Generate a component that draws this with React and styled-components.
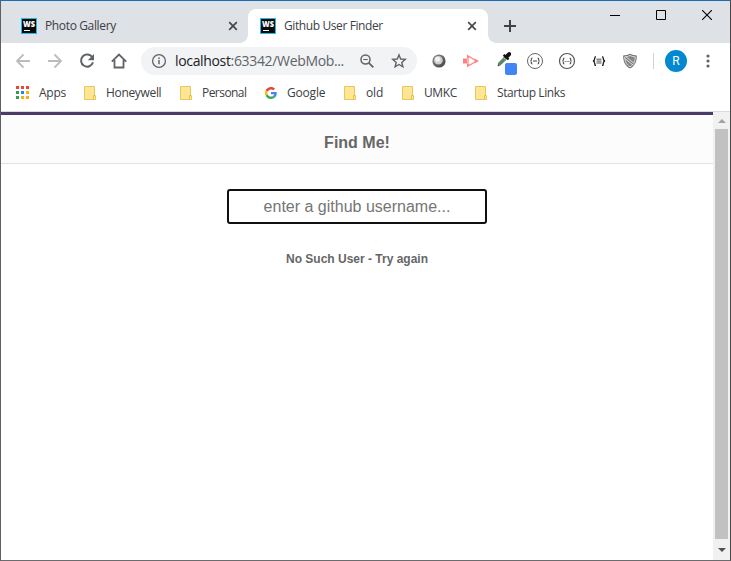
import React from "react";
import styled, { createGlobalStyle } from "styled-components";

const GlobalStyle = createGlobalStyle`
  * { box-sizing: border-box; }
  html, body { margin: 0; padding: 0; overflow: hidden; }
  body { font-family: "Open Sans", "Noto Sans", sans-serif; }
  svg { display: block; flex: none; }
`;

const BrowserWindow = styled.div`
  width: 731px;
  height: 561px;
  display: flex;
  flex-direction: column;
  background: #fff;
  border: 1px solid #5f5f61;
  border-top-color: #1a6fb4;
  border-right-color: #48484b;
  border-bottom-color: #6c6c6e;
`;

const TabStrip = styled.div`
  height: 42px;
  flex: none;
  display: flex;
  background: #dee1e6;
`;

const Tab = styled.div`
  position: relative;
  width: ${(p) => (p.$active ? 240 : 247)}px;
  height: 34px;
  margin-top: 8px;
  padding: 0 ${(p) => (p.$active ? 11 : 10)}px 0 ${(p) => (p.$active ? 12 : 20)}px;
  display: flex;
  align-items: center;
  border-radius: 8px 8px 0 0;
  background: ${(p) => (p.$active ? "#fff" : "transparent")};
  ${(p) =>
    p.$active &&
    `
    &::before, &::after {
      content: "";
      position: absolute;
      bottom: 0;
      width: 8px;
      height: 8px;
    }
    &::before { right: 100%; background: radial-gradient(circle at 0 0, transparent 7.5px, #fff 8px); }
    &::after { left: 100%; background: radial-gradient(circle at 100% 0, transparent 7.5px, #fff 8px); }
  `}
`;

const TabTitle = styled.span`
  flex: 1;
  margin-left: 8px;
  font-size: 12px;
  line-height: 16px;
  white-space: nowrap;
  letter-spacing: ${(p) => p.$tracking}px;
  color: #3c4043;
`;

const NewTab = styled.div`
  width: 44px;
  display: flex;
  align-items: center;
  justify-content: center;
  padding-top: 8px;
`;

const WindowControls = styled.div`
  margin-left: auto;
  display: flex;
  height: 28px;
`;

const ControlButton = styled.div`
  width: 46px;
  display: flex;
  align-items: center;
  justify-content: center;
`;

const Toolbar = styled.div`
  height: 36px;
  flex: none;
  display: flex;
  align-items: center;
  padding-left: 6px;
`;

const IconSlot = styled.div`
  width: ${(p) => p.$w || 32}px;
  height: 32px;
  display: flex;
  align-items: center;
  justify-content: center;
  flex: none;
`;

const Omnibox = styled.div`
  width: 276px;
  height: 28px;
  margin-left: 6px;
  margin-right: 6px;
  border-radius: 14px;
  background: #f1f3f4;
  display: flex;
  align-items: center;
  padding-left: 10px;
  flex: none;
`;

const Address = styled.span`
  width: 174px;
  margin-left: 8px;
  font-size: 14px;
  line-height: 18px;
  letter-spacing: -0.34px;
  white-space: nowrap;
  color: #5f6368;
`;

const Host = styled.span`
  color: #202124;
`;

const ToolbarDivider = styled.div`
  width: 1px;
  height: 16px;
  margin-right: 11px;
  background: #cfd1d4;
`;

const Avatar = styled.div`
  width: 22px;
  height: 22px;
  flex: none;
  border-radius: 50%;
  background: #0288d1;
  color: #fff;
  font: 12px/22px Roboto, sans-serif;
  text-align: center;
`;

const BookmarkBar = styled.div`
  height: 33px;
  flex: none;
  display: flex;
  padding: 0 0 4px 15px;
  border-bottom: 1px solid #dadce0;
`;

const Bookmark = styled.div`
  width: ${(p) => p.$w}px;
  flex: none;
  display: flex;
  align-items: center;
`;

const BookmarkName = styled.span`
  margin-left: ${(p) => p.$gap}px;
  font-size: 12px;
  line-height: 16px;
  white-space: nowrap;
  letter-spacing: ${(p) => p.$tracking}px;
  color: #3c4043;
`;

const Viewport = styled.div`
  flex: 1;
  min-height: 0;
  display: flex;
`;

const Page = styled.main`
  flex: 1;
  font-family: "Liberation Sans", Arial, sans-serif;
  color: #666;
  text-align: center;
`;

const PageHeader = styled.header`
  height: 52px;
  border-top: 3px solid #4b3c67;
  border-bottom: 1px solid #e1e1e1;
  background: #fcfcfc;
`;

const Heading = styled.h1`
  margin: 0;
  padding-top: 17px;
  font-size: 16px;
  line-height: 22px;
  font-weight: bold;
`;

const UserInput = styled.input`
  display: block;
  width: 260px;
  height: 35px;
  margin: 25px auto 0;
  padding: 0;
  border: 2px solid #101010;
  border-radius: 3px;
  outline: none;
  background: #fff;
  font: 16px "Liberation Sans", Arial, sans-serif;
  text-align: center;
  &::placeholder { color: #757575; opacity: 1; }
`;

const Message = styled.p`
  margin: 27px 0 0;
  font-size: 12px;
  line-height: 16px;
  font-weight: bold;
`;

const Scrollbar = styled.div`
  width: 17px;
  display: flex;
  flex-direction: column;
  align-items: center;
  background: #f1f1f1;
`;

const ScrollArrow = styled.div`
  height: ${(p) => p.$h}px;
  display: flex;
  align-items: center;
`;

const ScrollThumb = styled.div`
  width: 13px;
  flex: 1;
  background: #c1c1c1;
`;

const Favicon = () => (
  <svg width="16" height="16" viewBox="0 0 16 16">
    <rect width="16" height="16" fill="#15bfe8" />
    <rect x="1" y="1" width="14" height="14" fill="#080808" />
    <text x="8" y="9" fill="#fff" fontFamily="Open Sans, sans-serif" fontSize="8.4" fontWeight="800" textAnchor="middle" textLength="12" lengthAdjust="spacingAndGlyphs">WS</text>
    <path d="M3 12.5h6" stroke="#fff" />
  </svg>
);

const CloseIcon = () => (
  <svg width="10" height="10" viewBox="0 0 10 10">
    <path d="M1.2 1.2l7.6 7.6M8.8 1.2L1.2 8.8" stroke="#45494d" strokeWidth="1.7" />
  </svg>
);

const Stroke = ({ d, size = 16, color = "#5f6368", width = 1.8 }) => (
  <svg width={size} height={size} viewBox={`0 0 ${size} ${size}`} fill="none" stroke={color} strokeWidth={width}>
    <path d={d} />
  </svg>
);

const ReloadIcon = () => (
  <svg width="16" height="16" viewBox="0 0 16 16">
    <path d="M13.4 4.4A6.1 6.1 0 1 0 14 9.3" fill="none" stroke="#5f6368" strokeWidth="2" />
    <path d="M15 1v6.2H8.8z" fill="#5f6368" />
  </svg>
);

const InfoIcon = () => (
  <svg width="16" height="16" viewBox="0 0 16 16">
    <circle cx="8" cy="8" r="6.4" fill="none" stroke="#5f6368" strokeWidth="1.3" />
    <path d="M8 7.1v4.2M8 4.5v1.6" stroke="#5f6368" strokeWidth="1.5" />
  </svg>
);

const ZoomOutIcon = () => (
  <svg width="16" height="16" viewBox="0 0 16 16" fill="none" stroke="#5f6368">
    <circle cx="6.5" cy="6.5" r="4.5" strokeWidth="1.5" />
    <path d="M4.3 6.5h4.4" strokeWidth="1.1" />
    <path d="M9.8 9.8l4.5 4.5" strokeWidth="1.8" />
  </svg>
);

const StarIcon = () => (
  <svg width="16" height="16" viewBox="0 0 16 16" fill="none" stroke="#5f6368" strokeWidth="1.4">
    <path d="M8 1.9l1.7 4.1 4.6.4-3.5 3 1.1 4.4L8 11.5l-3.9 2.3 1.1-4.4-3.500-3 4.600-.4z" />
  </svg>
);

const OrbIcon = () => (
  <svg width="16" height="16" viewBox="0 0 16 16">
    <defs>
      <linearGradient id="orb" x1="0" y1="0" x2="1" y2="1">
        <stop offset="0" stopColor="#929292" />
        <stop offset=".5" stopColor="#666" />
        <stop offset="1" stopColor="#444" />
      </linearGradient>
    </defs>
    <circle cx="8" cy="8" r="6.6" fill="url(#orb)" />
    <circle cx="7.4" cy="7.2" r="4.3" fill="#d0d0d0" />
    <circle cx="6.6" cy="6.2" r="2.5" fill="#f3f3f3" />
  </svg>
);

const PlayerIcon = () => (
  <svg width="18" height="16" viewBox="0 0 18 16" fill="#ff8080">
    <path d="M1 5.500h4v5H1z" />
    <path d="M6 3.500V12.500M7.500 3.700L13 7M7.500 12.300L13 9" stroke="#ff8080" strokeWidth="1.200" />
    <path d="M5 1.500L8.500 4 5 5.200zM12.500 5.500L17 8l-4.500 2.500zM5 14.500L8.500 12 5 10.800z" />
  </svg>
);

const DropperIcon = () => (
  <svg width="22" height="28" viewBox="0 0 22 28">
    <path d="M2 19l1-3.400 5.500-5.600 2 2-5.800 5.600z" fill="#a5bfa9" stroke="#33483a" strokeWidth=".9" />
    <path d="M3.500 17.200l5-5" stroke="#39874b" strokeWidth="1.500" />
    <path d="M6.800 8.700l1.600-1.600 1 .8 2-2c1-1 2.600-1 3.200-.3.700.8.700 2.200-.2 3.100l-2 2 .9 1-1.500 1.500z" fill="#111" />
    <rect x="9" y="16" width="12" height="12" rx="2" fill="#4285f4" />
  </svg>
);

const RingBraces = ({ weight, dotted }) => (
  <svg width="18" height="18" viewBox="0 0 18 18" fill="none" stroke="#555">
    <circle cx="9" cy="9" r="7.500" strokeWidth={weight} />
    <path
      d="M6.400 6.200c-1.200 0-1 .6-1 1.400 0 .8 0 1.400-1 1.400 1 0 1 .6 1 1.400 0 .8-.2 1.400 1 1.400M11.600 6.200c1.200 0 1 .6 1 1.400 0 .8 0 1.400 1 1.400-1 0-1 .6-1 1.400 0 .8.200 1.400-1 1.400"
      strokeWidth="1.200"
    />
    <path d={dotted ? "M6.700 9.500h4.600" : "M7 9h4"} strokeWidth="1.100" strokeDasharray={dotted ? "1 .8" : undefined} />
  </svg>
);

const ListBraces = () => (
  <svg width="14" height="12" viewBox="0 0 14 12" fill="none" stroke="#222">
    <path
      d="M4 1.600C2.700 1.600 2.700 2.200 2.700 3.600c0 1.500-.2 2.200-1.700 2.400 1.500.2 1.700.9 1.700 2.400 0 1.400 0 2 1.300 2M10 1.600c1.300 0 1.300.6 1.300 2 0 1.500.2 2.200 1.700 2.400-1.500.2-1.700.9-1.700 2.400 0 1.400 0 2-1.300 2"
      strokeWidth="1.400"
    />
    <path d="M4.500 4.200h5M4.500 6.100h5M4.500 8h5" strokeWidth=".8" />
  </svg>
);

const ShieldIcon = () => (
  <svg width="16" height="16" viewBox="0 0 16 16">
    <path d="M8 .7c2.200 1.300 4.400 1.700 6.800 1.700.1 5.200-1.400 10.200-6.800 13.100C2.600 12.600 1.100 7.600 1.200 2.400 3.600 2.400 5.800 2 8 .7z" fill="#6f6f6f" />
    <path d="M8 2.400c1.800 1 3.500 1.400 5.300 1.400C13.200 8 12 11.700 8 13.900 4 11.700 2.800 8 2.700 3.800 4.500 3.800 6.200 3.400 8 2.400z" fill="#858585" stroke="#f4f4f4" strokeWidth=".8" />
    <path d="M3.300 4.500l8.300 6.800" stroke="#f4f4f4" strokeWidth="2.600" />
    <path d="M3.300 4.500l8.300 6.800" stroke="#777" strokeWidth="1.200" />
  </svg>
);

const MenuIcon = () => (
  <svg width="4" height="14" viewBox="0 0 4 14" fill="#5f6368">
    <circle cx="2" cy="2" r="1.6" />
    <circle cx="2" cy="7" r="1.6" />
    <circle cx="2" cy="12" r="1.6" />
  </svg>
);

const FolderIcon = () => (
  <svg width="12" height="14" viewBox="0 0 12 14">
    <path d="M.5.500h10v9h1v4H.500z" fill="#ffe694" stroke="#e8c75a" />
    <path d="M9.500 13V9.500h1.500" fill="none" stroke="#e8c04c" />
  </svg>
);

const appColors = ["#f44336", "#f44336", "#f44336", "#319f56", "#2187f3", "#f6b012", "#319f56", "#f6b012", "#f6b012"];

const AppsIcon = () => (
  <svg width="14" height="14" viewBox="0 0 14 14">
    {appColors.map((c, i) => (
      <rect key={i} x={(i % 3) * 5} y={Math.floor(i / 3) * 5} width="3" height="3" fill={c} />
    ))}
  </svg>
);

const GoogleIcon = () => (
  <svg width="12" height="12" viewBox="0 0 48 48">
    <path fill="#EA4335" d="M24 9.500c3.540 0 6.710 1.220 9.210 3.600l6.850-6.850C35.900 2.380 30.470 0 24 0 14.620 0 6.510 5.380 2.560 13.220l7.980 6.190C12.430 13.720 17.740 9.500 24 9.500z" />
    <path fill="#4285F4" d="M46.980 24.550c0-1.570-.15-3.090-.38-4.550H24v9.020h12.940c-.58 2.960-2.260 5.480-4.780 7.180l7.730 6c4.510-4.180 7.090-10.360 7.090-17.650z" />
    <path fill="#FBBC05" d="M10.530 28.590c-.48-1.450-.76-2.990-.76-4.590s.27-3.140.76-4.590l-7.980-6.190C.92 16.460 0 20.120 0 24c0 3.880.92 7.540 2.560 10.780l7.970-6.190z" />
    <path fill="#34A853" d="M24 48c6.480 0 11.930-2.130 15.890-5.810l-7.730-6c-2.150 1.450-4.920 2.300-8.160 2.300-6.260 0-11.570-4.220-13.470-9.910l-7.980 6.190C6.510 42.620 14.620 48 24 48z" />
  </svg>
);

const bookmarks = [
  { name: "Apps", icon: AppsIcon, width: 68, gap: 9, tracking: -0.25 },
  { name: "Honeywell", icon: FolderIcon, width: 96, gap: 10, tracking: -0.33 },
  { name: "Personal", icon: FolderIcon, width: 85, gap: 10, tracking: -0.55 },
  { name: "Google", icon: GoogleIcon, width: 79, gap: 10, tracking: -0.2 },
  { name: "old", icon: FolderIcon, width: 58, gap: 10, tracking: -0.1 },
  { name: "UMKC", icon: FolderIcon, width: 73, gap: 10, tracking: -0.4 },
  { name: "Startup Links", icon: FolderIcon, width: 110, gap: 10, tracking: -0.4 },
];

export default function App() {
  return (
    <>
      <GlobalStyle />
      <BrowserWindow>
        <TabStrip>
          <Tab>
            <Favicon />
            <TabTitle $tracking={-0.36}>Photo Gallery</TabTitle>
            <CloseIcon />
          </Tab>
          <Tab $active>
            <Favicon />
            <TabTitle $tracking={-0.4}>Github User Finder</TabTitle>
            <CloseIcon />
          </Tab>
          <NewTab>
            <Stroke size={12} d="M6 0v12M0 6h12" color="#3f4347" width={2} />
          </NewTab>
          <WindowControls>
            <ControlButton><Stroke size={10} d="M0 5.500h10" color="#000" width={1} /></ControlButton>
            <ControlButton><Stroke size={10} d="M.5.500h9v9h-9z" color="#000" width={1} /></ControlButton>
            <ControlButton><Stroke size={10} d="M0 0l10 10M10 0L0 10" color="#000" width={1.1} /></ControlButton>
          </WindowControls>
        </TabStrip>

        <Toolbar>
          <IconSlot><Stroke d="M15 8H2M8.500 1.500L2 8l6.500 6.500" color="#babcbe" /></IconSlot>
          <IconSlot><Stroke d="M1 8h13M7.500 1.500L14 8l-6.500 6.500" color="#babcbe" /></IconSlot>
          <IconSlot><ReloadIcon /></IconSlot>
          <IconSlot><Stroke d="M.8 8.700L8 1.500l7.200 7.200M3.500 7v7.500h9V7" /></IconSlot>
          <Omnibox>
            <InfoIcon />
            <Address><Host>localhost</Host>:63342/WebMob...</Address>
            <IconSlot $w={36}><ZoomOutIcon /></IconSlot>
            <IconSlot $w={28}><StarIcon /></IconSlot>
          </Omnibox>
          <IconSlot><OrbIcon /></IconSlot>
          <IconSlot><PlayerIcon /></IconSlot>
          <IconSlot $w={40}><DropperIcon /></IconSlot>
          <IconSlot $w={16}><RingBraces weight={0.9} /></IconSlot>
          <IconSlot $w={48}><RingBraces weight={1.2} dotted /></IconSlot>
          <IconSlot $w={16}><ListBraces /></IconSlot>
          <IconSlot $w={46}><ShieldIcon /></IconSlot>
          <ToolbarDivider />
          <Avatar>R</Avatar>
          <IconSlot $w={42}><MenuIcon /></IconSlot>
        </Toolbar>

        <BookmarkBar>
          {bookmarks.map(({ name, icon: Icon, width, gap, tracking }) => (
            <Bookmark key={name} $w={width}>
              <Icon />
              <BookmarkName $gap={gap} $tracking={tracking}>{name}</BookmarkName>
            </Bookmark>
          ))}
        </BookmarkBar>

        <Viewport>
          <Page>
            <PageHeader><Heading>Find Me!</Heading></PageHeader>
            <UserInput type="text" placeholder="enter a github username..." />
            <Message>No Such User - Try again</Message>
          </Page>
          <Scrollbar>
            <ScrollArrow $h={17}>
              <svg width="8" height="4" viewBox="0 0 8 4"><path d="M0 4l4-4 4 4z" fill="#a3a3a3" /></svg>
            </ScrollArrow>
            <ScrollThumb />
            <ScrollArrow $h={21}>
              <svg width="8" height="4" viewBox="0 0 8 4"><path d="M0 0h8L4 4z" fill="#505050" /></svg>
            </ScrollArrow>
          </Scrollbar>
        </Viewport>
      </BrowserWindow>
    </>
  );
}
